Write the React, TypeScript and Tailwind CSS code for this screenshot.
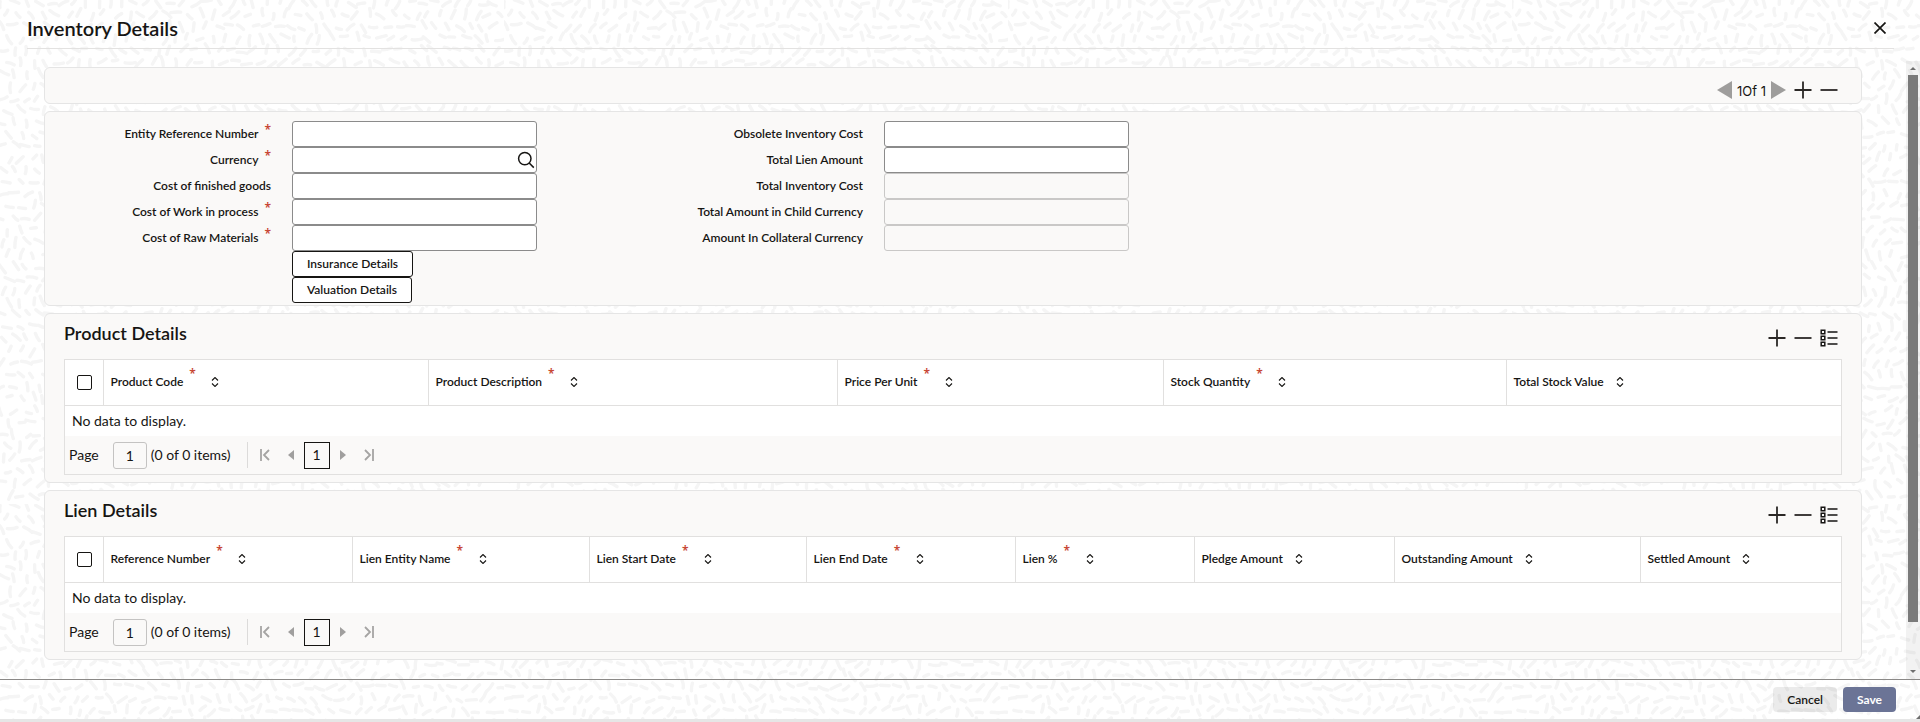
import React from 'react';

interface Column {
  label: string;
  width: string;
  required?: boolean;
}

interface Field {
  id: string;
  label: string;
  required?: boolean;
  disabled?: boolean;
  lookup?: boolean;
}

const leftFields: Field[] = [
  { id: 'entityRef', label: 'Entity Reference Number', required: true },
  { id: 'currency', label: 'Currency', required: true, lookup: true },
  { id: 'finishedGoods', label: 'Cost of finished goods' },
  { id: 'workInProcess', label: 'Cost of Work in process', required: true },
  { id: 'rawMaterials', label: 'Cost of Raw Materials', required: true },
];

const rightFields: Field[] = [
  { id: 'obsoleteCost', label: 'Obsolete Inventory Cost' },
  { id: 'lienAmount', label: 'Total Lien Amount' },
  { id: 'inventoryCost', label: 'Total Inventory Cost', disabled: true },
  { id: 'childCurrency', label: 'Total Amount in Child Currency', disabled: true },
  { id: 'collateralCurrency', label: 'Amount In Collateral Currency', disabled: true },
];

const productColumns: Column[] = [
  { label: 'Product Code', width: 'w-[325px]', required: true },
  { label: 'Product Description', width: 'w-[409px]', required: true },
  { label: 'Price Per Unit', width: 'w-[326px]', required: true },
  { label: 'Stock Quantity', width: 'w-[343px]', required: true },
  { label: 'Total Stock Value', width: 'w-[335px]' },
];

const lienColumns: Column[] = [
  { label: 'Reference Number', width: 'w-[249px]', required: true },
  { label: 'Lien Entity Name', width: 'w-[237px]', required: true },
  { label: 'Lien Start Date', width: 'w-[217px]', required: true },
  { label: 'Lien End Date', width: 'w-[209px]', required: true },
  { label: 'Lien %', width: 'w-[179px]', required: true },
  { label: 'Pledge Amount', width: 'w-[200px]' },
  { label: 'Outstanding Amount', width: 'w-[246px]' },
  { label: 'Settled Amount', width: 'w-[201px]' },
];

// Short strokes that follow a slowly turning direction, repeated as a tile
const TILE = 504;
const STEP_X = 12;
const STEP_Y = 12;

function buildStrokes() {
  let seed = 7;
  const random = () => {
    seed = (seed * 16807) % 2147483647;
    return seed / 2147483647;
  };
  const k = (Math.PI * 2) / TILE;
  const strokes: string[] = [];
  for (let row = 0; row < TILE / STEP_Y; row++) {
    for (let col = 0; col < TILE / STEP_X; col++) {
      const x = col * STEP_X + (row % 2) * 6 + random() * 5;
      const y = row * STEP_Y + random() * 5;
      const angle =
        2 * Math.sin(k * (2 * x + y)) +
        1.7 * Math.cos(k * (4 * y - x)) +
        1.1 * Math.sin(k * 5 * x) +
        (random() - 0.5) * 0.8;
      const half = 2.6 + random() * 2.6;
      const dx = Math.cos(angle) * half;
      const dy = Math.sin(angle) * half;
      const bend = (random() - 0.5) * 0.6;
      strokes.push(
        `M${(x - dx).toFixed(1)} ${(y - dy).toFixed(1)}Q${(x - dy * bend).toFixed(1)} ${(y + dx * bend).toFixed(1)} ${(x + dx).toFixed(1)} ${(y + dy).toFixed(1)}`
      );
    }
  }
  return strokes.join('');
}

const strokePath = buildStrokes();

function Backdrop() {
  return (
    <svg className="absolute inset-0 -z-10 h-full w-full" aria-hidden="true">
      <defs>
        <pattern id="strokes" width={TILE} height={TILE} patternUnits="userSpaceOnUse">
          <path d={strokePath} fill="none" stroke="#f5f5f5" strokeWidth="3.4" strokeLinecap="round" />
        </pattern>
      </defs>
      <rect width="100%" height="100%" fill="url(#strokes)" />
    </svg>
  );
}

function PlusIcon() {
  return (
    <svg width="18" height="18" viewBox="0 0 18 18" stroke="#2b2826" strokeWidth="1.8" aria-hidden="true">
      <path d="M9 .5v17M.5 9h17" />
    </svg>
  );
}

function MinusIcon() {
  return (
    <svg width="18" height="18" viewBox="0 0 18 18" stroke="#2b2826" strokeWidth="1.8" aria-hidden="true">
      <path d="M.5 9h17" />
    </svg>
  );
}

function ListIcon() {
  return (
    <svg width="18" height="18" viewBox="0 0 18 18" fill="none" stroke="#161513" aria-hidden="true">
      <path d="M1.2 1.2h3.6v3.6H1.2zM1.2 7.2h3.6v3.6H1.2zM1.2 13.2h3.6v3.6H1.2z" strokeWidth="1.5" />
      <path d="M7.5 3h10M7.5 9h10M7.5 15h10" strokeWidth="1.6" />
    </svg>
  );
}

function SortIcon() {
  return (
    <svg width="8" height="10" viewBox="0 0 8 10" fill="none" stroke="#161513" strokeWidth="1.1" aria-hidden="true">
      <path d="M1 3.5l3-3 3 3M1 6.5l3 3 3-3" />
    </svg>
  );
}

function Required() {
  return (
    <span className="h-6 font-['Noto_Sans',sans-serif] text-xs leading-4 font-semibold text-[#c74634]" aria-hidden="true">
      *
    </span>
  );
}

function Panel({ children, className = '' }: { children?: React.ReactNode; className?: string }) {
  return (
    <section className={`rounded-md border border-[#e5e5e5] bg-[#faf9f8] ${className}`}>{children}</section>
  );
}

function FieldRow({ field }: { field: Field }) {
  return (
    <div className="grid h-[26px] grid-cols-[206fr_245fr_99fr] items-center gap-x-[21px]">
      <label htmlFor={field.id} className="flex items-center justify-end gap-1.5 text-xs font-semibold whitespace-nowrap">
        {field.label}
        {field.required && <Required />}
      </label>
      <div className="relative">
        <input
          id={field.id}
          type="text"
          disabled={field.disabled}
          className="block h-[26px] w-full rounded-[3px] border border-[#8b8b8b] bg-white px-2 text-sm disabled:border-[#c9c8c7] disabled:bg-[#faf9f8]"
        />
        {field.lookup && (
          <button type="button" aria-label="Search" className="absolute top-1 right-0.5">
            <svg width="18" height="18" viewBox="0 0 18 18" fill="none" stroke="#161513" strokeWidth="1.5">
              <circle cx="7.8" cy="7.6" r="6.2" />
              <path d="M12.2 12l4.6 4.6" />
            </svg>
          </button>
        )}
      </div>
    </div>
  );
}

function DetailButton({ children }: { children: React.ReactNode }) {
  return (
    <button type="button" className="h-[26px] rounded-[3px] border border-[#161513] bg-white px-3.5 text-xs font-semibold">
      {children}
    </button>
  );
}

function Pager({ name }: { name: string }) {
  return (
    <div className="flex h-[38px] items-center pl-1 text-sm">
      <label htmlFor={`${name}-page`}>Page</label>
      <input
        id={`${name}-page`}
        type="text"
        defaultValue="1"
        className="ml-3.5 h-[27px] w-[34px] rounded-[3px] border border-[#c4c3c2] text-center"
      />
      <span className="ml-1">(0 of 0 items)</span>
      <span className="ml-4 h-[26px] w-px bg-[#dcdbda]" />
      <button type="button" aria-label="First page" className="ml-3">
        <svg width="10" height="12" viewBox="0 0 10 12" fill="none" stroke="#a5a4a3" strokeWidth="1.8">
          <path d="M1 0v12M9 1L4 6l5 5" />
        </svg>
      </button>
      <button type="button" aria-label="Previous page" className="ml-[18px]">
        <svg width="6" height="10" viewBox="0 0 6 10" fill="#a09f9e">
          <path d="M6 0v10L0 5z" />
        </svg>
      </button>
      <button type="button" className="ml-2.5 h-[27px] w-[26px] border border-[#161513]">
        1
      </button>
      <button type="button" aria-label="Next page" className="ml-2.5">
        <svg width="6" height="10" viewBox="0 0 6 10" fill="#a09f9e">
          <path d="M0 0v10l6-5z" />
        </svg>
      </button>
      <button type="button" aria-label="Last page" className="ml-[18px]">
        <svg width="10" height="12" viewBox="0 0 10 12" fill="none" stroke="#a5a4a3" strokeWidth="1.8">
          <path d="M9 0v12M1 1l5 5-5 5" />
        </svg>
      </button>
    </div>
  );
}

function GridPanel({ name, title, columns }: { name: string; title: string; columns: Column[] }) {
  return (
    <Panel className="px-[19px] pb-[7px]">
      <div className="flex h-[45px] items-center justify-between pr-1">
        <h2 className="pb-2 text-lg leading-6 font-semibold">{title}</h2>
        <div className="flex gap-2 pt-0.5">
          <button type="button" aria-label="Add row">
            <PlusIcon />
          </button>
          <button type="button" aria-label="Remove row">
            <MinusIcon />
          </button>
          <button type="button" aria-label="Columns">
            <ListIcon />
          </button>
        </div>
      </div>
      <div className="border border-[#e1e0df]">
        <table className="w-full table-fixed bg-white text-left">
          <colgroup>
            <col className="w-[38px]" />
            {columns.map((column) => (
              <col key={column.label} className={column.width} />
            ))}
          </colgroup>
          <thead>
            <tr className="h-[45px] border-b border-[#e1e0df]">
              <th className="pl-3 align-middle">
                <input
                  type="checkbox"
                  aria-label={`Select all ${title}`}
                  className="block size-[15px] appearance-none rounded-[2px] border border-[#161513] bg-white"
                />
              </th>
              {columns.map((column) => (
                <th key={column.label} className="border-l border-[#e1e0df] pl-[7px] text-xs font-semibold whitespace-nowrap">
                  <span className="flex items-center">
                    {column.label}
                    {column.required && (
                      <span className="ml-1.5 flex h-8 w-2">
                        <Required />
                      </span>
                    )}
                    <button type="button" aria-label={`Sort by ${column.label}`} className={column.required ? 'ml-3.5' : 'ml-3'}>
                      <SortIcon />
                    </button>
                  </span>
                </th>
              ))}
            </tr>
          </thead>
          <tbody>
            <tr className="h-[31px]">
              <td colSpan={columns.length + 1} className="pl-[7px] text-sm">
                No data to display.
              </td>
            </tr>
          </tbody>
        </table>
        <Pager name={name} />
      </div>
    </Panel>
  );
}

export default function App() {
  return (
    <div className="relative isolate flex min-h-screen flex-col bg-white font-['Lato','Noto_Sans',sans-serif] text-[#161513]">
      <Backdrop />
      <header className="mr-[26px] mb-3 ml-[27px] flex h-[49px] items-center justify-between border-b border-[#e3e2e1]">
        <h1 className="pt-2 text-xl leading-6 font-semibold">Inventory Details</h1>
        <button type="button" aria-label="Close" className="mt-2 mr-2">
          <svg width="12" height="12" viewBox="0 0 12 12" stroke="#161513" strokeWidth="1.7">
            <path d="M.5.5l11 11M11.5.5l-11 11" />
          </svg>
        </button>
      </header>

      <div className="flex flex-1">
        <main className="flex min-w-0 flex-1 flex-col gap-[7px] px-11 pt-1.5 pb-[19px]">
          <Panel className="flex h-[37px] items-end justify-end pr-[23px] pb-1">
            <button type="button" aria-label="Previous record">
              <svg width="16" height="18" viewBox="0 0 16 18" fill="#9e9d9c">
                <path d="M15 0v18L0 9z" />
              </svg>
            </button>
            <span className="mx-1 font-['Inter',sans-serif] text-[13px] leading-4">1Of 1</span>
            <button type="button" aria-label="Next record">
              <svg width="16" height="18" viewBox="0 0 16 18" fill="#9e9d9c">
                <path d="M1 0v18l15-9z" />
              </svg>
            </button>
            <button type="button" aria-label="Add record" className="ml-2">
              <PlusIcon />
            </button>
            <button type="button" aria-label="Remove record" className="ml-2">
              <MinusIcon />
            </button>
          </Panel>

          <Panel className="grid grid-cols-3 px-5 pt-[9px] pb-0.5">
            <div>
              {leftFields.map((field) => (
                <FieldRow key={field.id} field={field} />
              ))}
              <div className="grid grid-cols-[206fr_245fr_99fr] gap-x-[21px]">
                <div className="col-start-2 flex flex-col items-start">
                  <DetailButton>Insurance Details</DetailButton>
                  <DetailButton>Valuation Details</DetailButton>
                </div>
              </div>
            </div>
            <div>
              {rightFields.map((field) => (
                <FieldRow key={field.id} field={field} />
              ))}
            </div>
          </Panel>

          <GridPanel name="product" title="Product Details" columns={productColumns} />
          <GridPanel name="lien" title="Lien Details" columns={lienColumns} />
        </main>

        <div className="flex w-3.5 flex-col items-center bg-black/5" aria-hidden="true">
          <svg width="14" height="14" viewBox="0 0 14 14" fill="#6f6f6f">
            <path d="M4 9l3-3 3 3z" />
          </svg>
          <div className="w-2.5 flex-[547] bg-[#7a7a7a]" />
          <div className="flex-[43]" />
          <svg width="14" height="14" viewBox="0 0 14 14" fill="#6f6f6f">
            <path d="M4 5l3 3 3-3z" />
          </svg>
        </div>
      </div>

      <footer className="relative flex justify-end gap-1.5 border-t border-[#8b8987] py-[7px] pr-6">
        <button type="button" className="h-[25px] rounded bg-black/8 px-3.5 text-xs font-semibold">
          Cancel
        </button>
        <button type="button" className="h-[25px] rounded bg-[#6b7496] px-3.5 text-xs font-bold text-white">
          Save
        </button>
        <svg className="absolute right-0 bottom-0" width="4" height="4" viewBox="0 0 4 4" fill="#6f6f6f" aria-hidden="true">
          <path d="M4 0v4H0z" />
        </svg>
      </footer>
      <div className="h-[3px] bg-[#e6e6e6]" />
    </div>
  );
}
